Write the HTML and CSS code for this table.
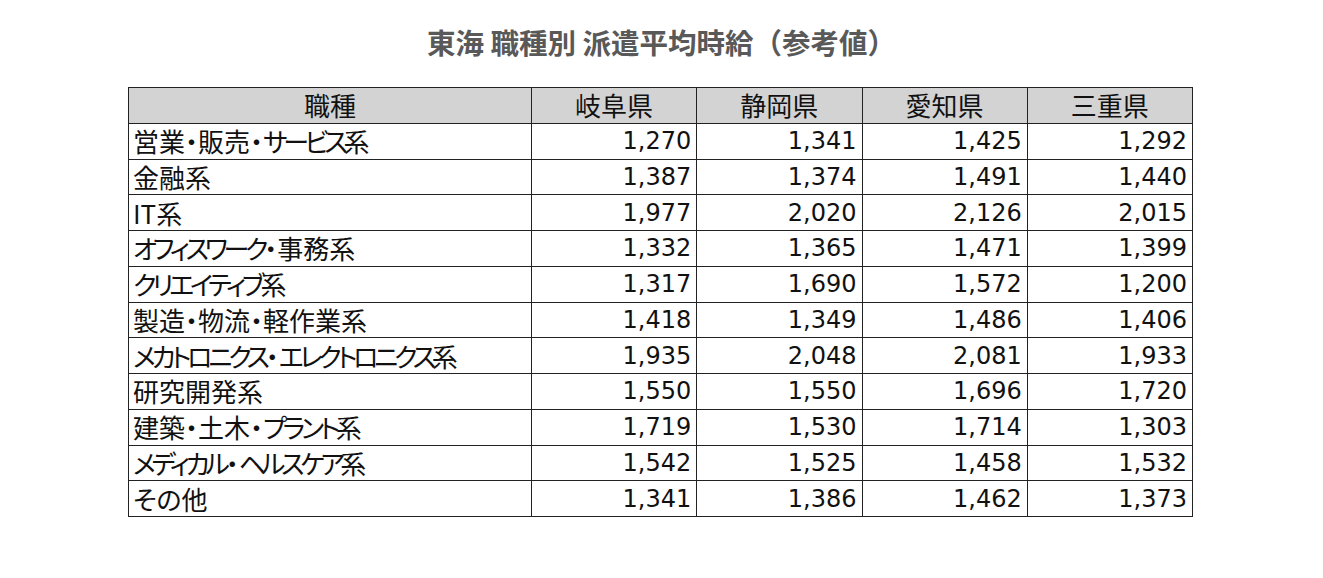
FILE: index.html
```html
<!DOCTYPE html>
<html lang="ja">
<head>
<meta charset="utf-8">
<link rel="stylesheet" href="styles.css">
</head>
<body>
<div class="page">
  <h1 class="title">東海 職種別 派遣平均時給（参考値）</h1>
  <table class="wage">
    <colgroup>
      <col class="c-job"><col class="c-num"><col class="c-num"><col class="c-num"><col class="c-num">
    </colgroup>
    <thead>
      <tr><th>職種</th><th>岐阜県</th><th>静岡県</th><th>愛知県</th><th>三重県</th></tr>
    </thead>
    <tbody>
      <tr><td class="job">営業・販売・<span class="kana">サービス</span>系</td><td>1,270</td><td>1,341</td><td>1,425</td><td>1,292</td></tr>
      <tr><td class="job">金融系</td><td>1,387</td><td>1,374</td><td>1,491</td><td>1,440</td></tr>
      <tr><td class="job">IT系</td><td>1,977</td><td>2,020</td><td>2,126</td><td>2,015</td></tr>
      <tr><td class="job"><span class="kana">オフィスワーク</span>・事務系</td><td>1,332</td><td>1,365</td><td>1,471</td><td>1,399</td></tr>
      <tr><td class="job"><span class="kana">クリエイティブ</span>系</td><td>1,317</td><td>1,690</td><td>1,572</td><td>1,200</td></tr>
      <tr><td class="job">製造・物流・軽作業系</td><td>1,418</td><td>1,349</td><td>1,486</td><td>1,406</td></tr>
      <tr><td class="job"><span class="kana">メカトロニクス</span>・<span class="kana">エレクトロニクス</span>系</td><td>1,935</td><td>2,048</td><td>2,081</td><td>1,933</td></tr>
      <tr><td class="job">研究開発系</td><td>1,550</td><td>1,550</td><td>1,696</td><td>1,720</td></tr>
      <tr><td class="job">建築・土木・<span class="kana">プラント</span>系</td><td>1,719</td><td>1,530</td><td>1,714</td><td>1,303</td></tr>
      <tr><td class="job"><span class="kana">メディカル</span>・<span class="kana">ヘルスケア</span>系</td><td>1,542</td><td>1,525</td><td>1,458</td><td>1,532</td></tr>
      <tr><td class="job">その他</td><td>1,341</td><td>1,386</td><td>1,462</td><td>1,373</td></tr>
    </tbody>
  </table>
</div>
</body>
</html>
```
FILE: styles.css
```css
html, body {
  margin: 0;
  padding: 0;
  background: #ffffff;
}
.page {
  width: 1323px;
  padding-top: 24px;
  font-family: "DejaVu Sans", "Noto Sans CJK JP", sans-serif;
}
.title {
  margin: 0 0 28px 0;
  text-align: center;
  font-family: "Noto Sans CJK JP", sans-serif;
  font-weight: 700;
  font-size: 28.5px;
  line-height: 35px;
  color: #595959;
}
.wage {
  border-collapse: collapse;
  margin-left: 128px;
  width: 1065px;
  table-layout: fixed;
  color: #111111;
}
.c-job { width: 403px; }
.wage th, .wage td {
  border: 1px solid #222222;
  height: 34.75px;
  padding: 0 5px;
  line-height: 30px;
  font-size: 24px;
  white-space: nowrap;
  overflow: hidden;
}
.wage th {
  background: #d3d3d3;
  font-family: "Noto Sans CJK JP", sans-serif;
  font-weight: 400;
  font-size: 26px;
  text-align: center;
  font-feature-settings: "palt";
}
.wage td {
  text-align: right;
}
.wage td.job {
  text-align: left;
  font-family: "Noto Sans CJK JP", sans-serif;
  font-size: 26px;
  font-feature-settings: "palt";
  padding-left: 4px;
}
.kana {
  letter-spacing: -4.2px;
}
```
